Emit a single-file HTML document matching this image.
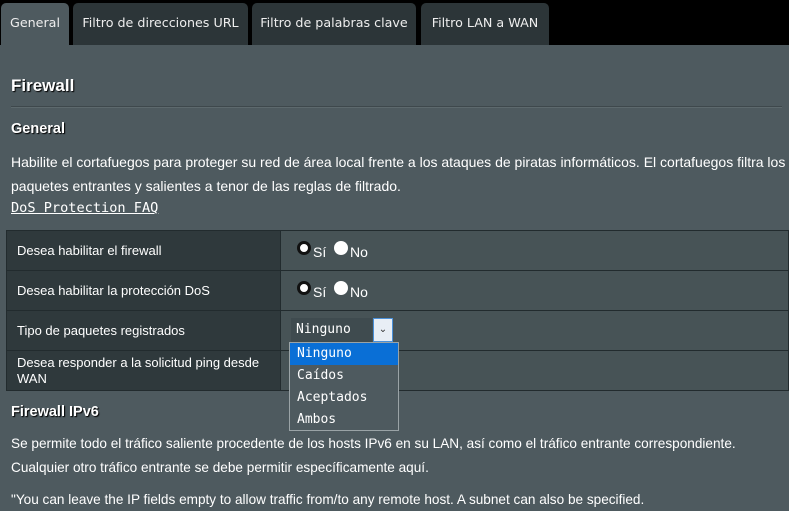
<!DOCTYPE html><html><head><meta charset="utf-8"><style>
body{margin:0;width:789px;height:511px;overflow:hidden;background:#000;font-family:"Liberation Sans",sans-serif;color:#fff;position:relative}
.tab{position:absolute;top:3px;height:42px;background:#2c3538;border-radius:5px 5px 0 0;font-family:"DejaVu Sans",sans-serif;font-size:12.7px;line-height:40px;text-align:center;color:#eee}
.main{position:absolute;top:45px;left:0;width:789px;height:466px;background:#4e5a5f}
.a{position:absolute;white-space:nowrap}
.h{font-weight:bold;text-shadow:1px 1px 1px #000}
.p{font-size:14px;left:11px}
table{position:absolute;left:6px;top:230px;width:783px;border-collapse:collapse;font-size:13px}
td{border:1px solid #222b2e;height:39px;padding:0 10px;vertical-align:middle}
td.l{background:#2f393c;width:253px}
td.v{background:#475356;font-size:14px;padding-left:16px}
.r{display:inline-block;width:14px;height:14px;border-radius:50%;background:#fff;vertical-align:2px;box-sizing:border-box;margin-right:2px}
.r.on{border:3.5px solid #111}
.mono{font-family:"DejaVu Sans Mono","Liberation Mono",monospace}
</style></head><body>
<div class="tab" style="left:1px;width:68px;background:#4e5a5f">General</div>
<div class="tab" style="left:73px;width:175px">Filtro de direcciones URL</div>
<div class="tab" style="left:252px;width:164px">Filtro de palabras clave</div>
<div class="tab" style="left:421px;width:128px">Filtro LAN a WAN</div>
<div class="main"></div>
<div class="a h" style="left:11px;top:76px;font-size:17px">Firewall</div>
<div class="a" style="left:11px;top:106px;width:771px;height:1px;background:#3e484c;border-bottom:1px solid #5d696d"></div>
<div class="a h" style="left:11px;top:121px;font-size:14.5px">General</div>
<div class="a p" style="top:154px">Habilite el cortafuegos para proteger su red de área local frente a los ataques de piratas informáticos. El cortafuegos filtra los</div>
<div class="a p" style="top:178px">paquetes entrantes y salientes a tenor de las reglas de filtrado.</div>
<div class="a mono" style="left:11px;top:200px;font-size:13.6px;text-decoration:underline">DoS Protection FAQ</div>
<table>
<tr><td class="l">Desea habilitar el firewall</td><td class="v"><span class="r on"></span>Sí &nbsp;<span class="r"></span>No</td></tr>
<tr><td class="l">Desea habilitar la protección DoS</td><td class="v"><span class="r on"></span>Sí &nbsp;<span class="r"></span>No</td></tr>
<tr><td class="l">Tipo de paquetes registrados</td><td class="v"></td></tr>
<tr><td class="l" style="line-height:16px">Desea responder a la solicitud ping desde<br>WAN</td><td class="v"></td></tr>
</table>
<div class="a mono" style="left:291px;top:318px;width:81px;height:24px;background:#3f4b4f;font-size:13px;line-height:24px;padding-left:5px;box-sizing:border-box">Ninguno</div>
<div class="a" style="left:373px;top:318px;width:20px;height:24px;background:#e8eef5;border:1px solid #4a90d9;box-sizing:border-box;color:#333;font-size:10px;text-align:center;line-height:22px">⌄</div>
<div class="a mono" style="left:289px;top:342px;width:110px;height:89px;background:#4e5a5f;border:1px solid #9aa3a6;box-sizing:border-box;font-size:13px">
<div style="background:#0a6fd6;height:22px;line-height:22px;padding-left:7px">Ninguno</div>
<div style="height:22px;line-height:22px;padding-left:7px">Caídos</div>
<div style="height:22px;line-height:22px;padding-left:7px">Aceptados</div>
<div style="height:22px;line-height:22px;padding-left:7px">Ambos</div></div>
<div class="a h" style="left:11px;top:404px;font-size:14.5px">Firewall IPv6</div>
<div class="a p" style="top:436px;font-size:13.6px">Se permite todo el tráfico saliente procedente de los hosts IPv6 en su LAN, así como el tráfico entrante correspondiente.</div>
<div class="a p" style="top:460px;font-size:13.6px">Cualquier otro tráfico entrante se debe permitir específicamente aquí.</div>
<div class="a p" style="top:492px;font-size:13.6px">"You can leave the IP fields empty to allow traffic from/to any remote host. A subnet can also be specified.</div>
</body></html>
